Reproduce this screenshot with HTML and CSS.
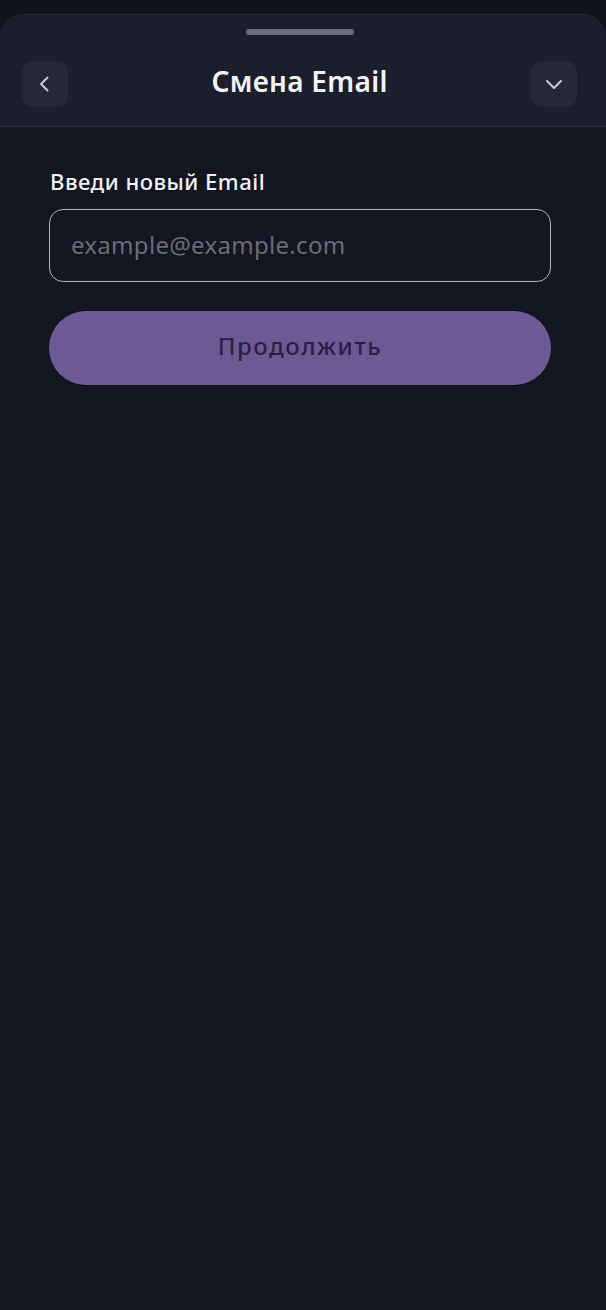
FILE: index.html
```html
<!DOCTYPE html>
<html lang="ru">
<head>
    <meta charset="UTF-8">
    <meta name="viewport" content="width=device-width, initial-scale=1.0">
    <title>Смена Email</title>
    <link rel="stylesheet" href="styles.css">
</head>
<body>
    <div class="sheet">
        <div class="sheet-head">
            <div class="handle"></div>
            <div class="head-row">
                <button class="icon-btn" aria-label="Назад">
                    <svg width="20" height="20" viewBox="0 0 20 20" fill="none" stroke="#c9cbd3" stroke-width="2" stroke-linecap="round" stroke-linejoin="round">
                        <path d="M12.5 3.5 6 10l6.5 6.5"/>
                    </svg>
                </button>
                <h1 class="title">Смена Email</h1>
                <button class="icon-btn" aria-label="Свернуть">
                    <svg width="22" height="22" viewBox="0 0 22 22" fill="none" stroke="#c9cbd3" stroke-width="2" stroke-linecap="round" stroke-linejoin="round">
                        <path d="M4 8l7 7 7-7"/>
                    </svg>
                </button>
            </div>
        </div>

        <div class="content">
            <label class="label" for="email">Введи новый Email</label>
            <input class="field" type="email" id="email" placeholder="example@example.com">
            <button class="submit" disabled>Продолжить</button>
        </div>
    </div>
</body>
</html>
```

FILE: styles.css
```css
html, body {
    margin: 0;
    padding: 0;
    background: #10121b;
}
body {
    font-family: "Noto Sans", "Open Sans", sans-serif;
    color: #fff;
    padding-top: 14px;
}
.sheet {
    background: #131520;
    border-radius: 24px 24px 0 0;
    border-top: 1px solid #2a2d3c;
    min-height: 1295px;
    overflow: hidden;
}
.sheet-head {
    background: #1b1e2d;
    border-bottom: 1px solid #2b2f40;
    padding: 14px 29px 19px 22px;
}
.handle {
    width: 108px;
    height: 6px;
    border-radius: 3px;
    background: #6b6e78;
    margin: 0 auto 26px;
}
.head-row {
    display: flex;
    align-items: center;
    justify-content: space-between;
}
.icon-btn {
    width: 46px;
    height: 46px;
    border: none;
    border-radius: 11px;
    background: #242839;
    display: flex;
    align-items: center;
    justify-content: center;
    padding: 0;
}
.title {
    margin: 0;
    padding-bottom: 6px;
    font-size: 28px;
    font-weight: 600;
    color: #f4f4f7;
    letter-spacing: 0.3px;
    line-height: 1;
}
.content {
    padding: 41px 55px 0 49px;
    display: flex;
    flex-direction: column;
}
.label {
    font-size: 22px;
    font-weight: 500;
    color: #f2f2f5;
    letter-spacing: 0.5px;
    line-height: 26px;
    margin: 0 0 15px 1px;
}
.field {
    height: 73px;
    box-sizing: border-box;
    border: 1.5px solid #b4b5bd;
    border-radius: 14px;
    background: transparent;
    padding: 0 21px 3px;
    font-family: inherit;
    font-size: 24px;
    letter-spacing: 0.3px;
    color: #fff;
}
.field::placeholder {
    color: #6b6c77;
}
.submit {
    margin-top: 29px;
    height: 74px;
    border: none;
    border-radius: 37px;
    background: #6d5a94;
    color: #2a1f44;
    font-family: inherit;
    font-size: 24px;
    font-weight: 500;
    letter-spacing: 1.5px;
    padding: 0 0 5px;
}
```
